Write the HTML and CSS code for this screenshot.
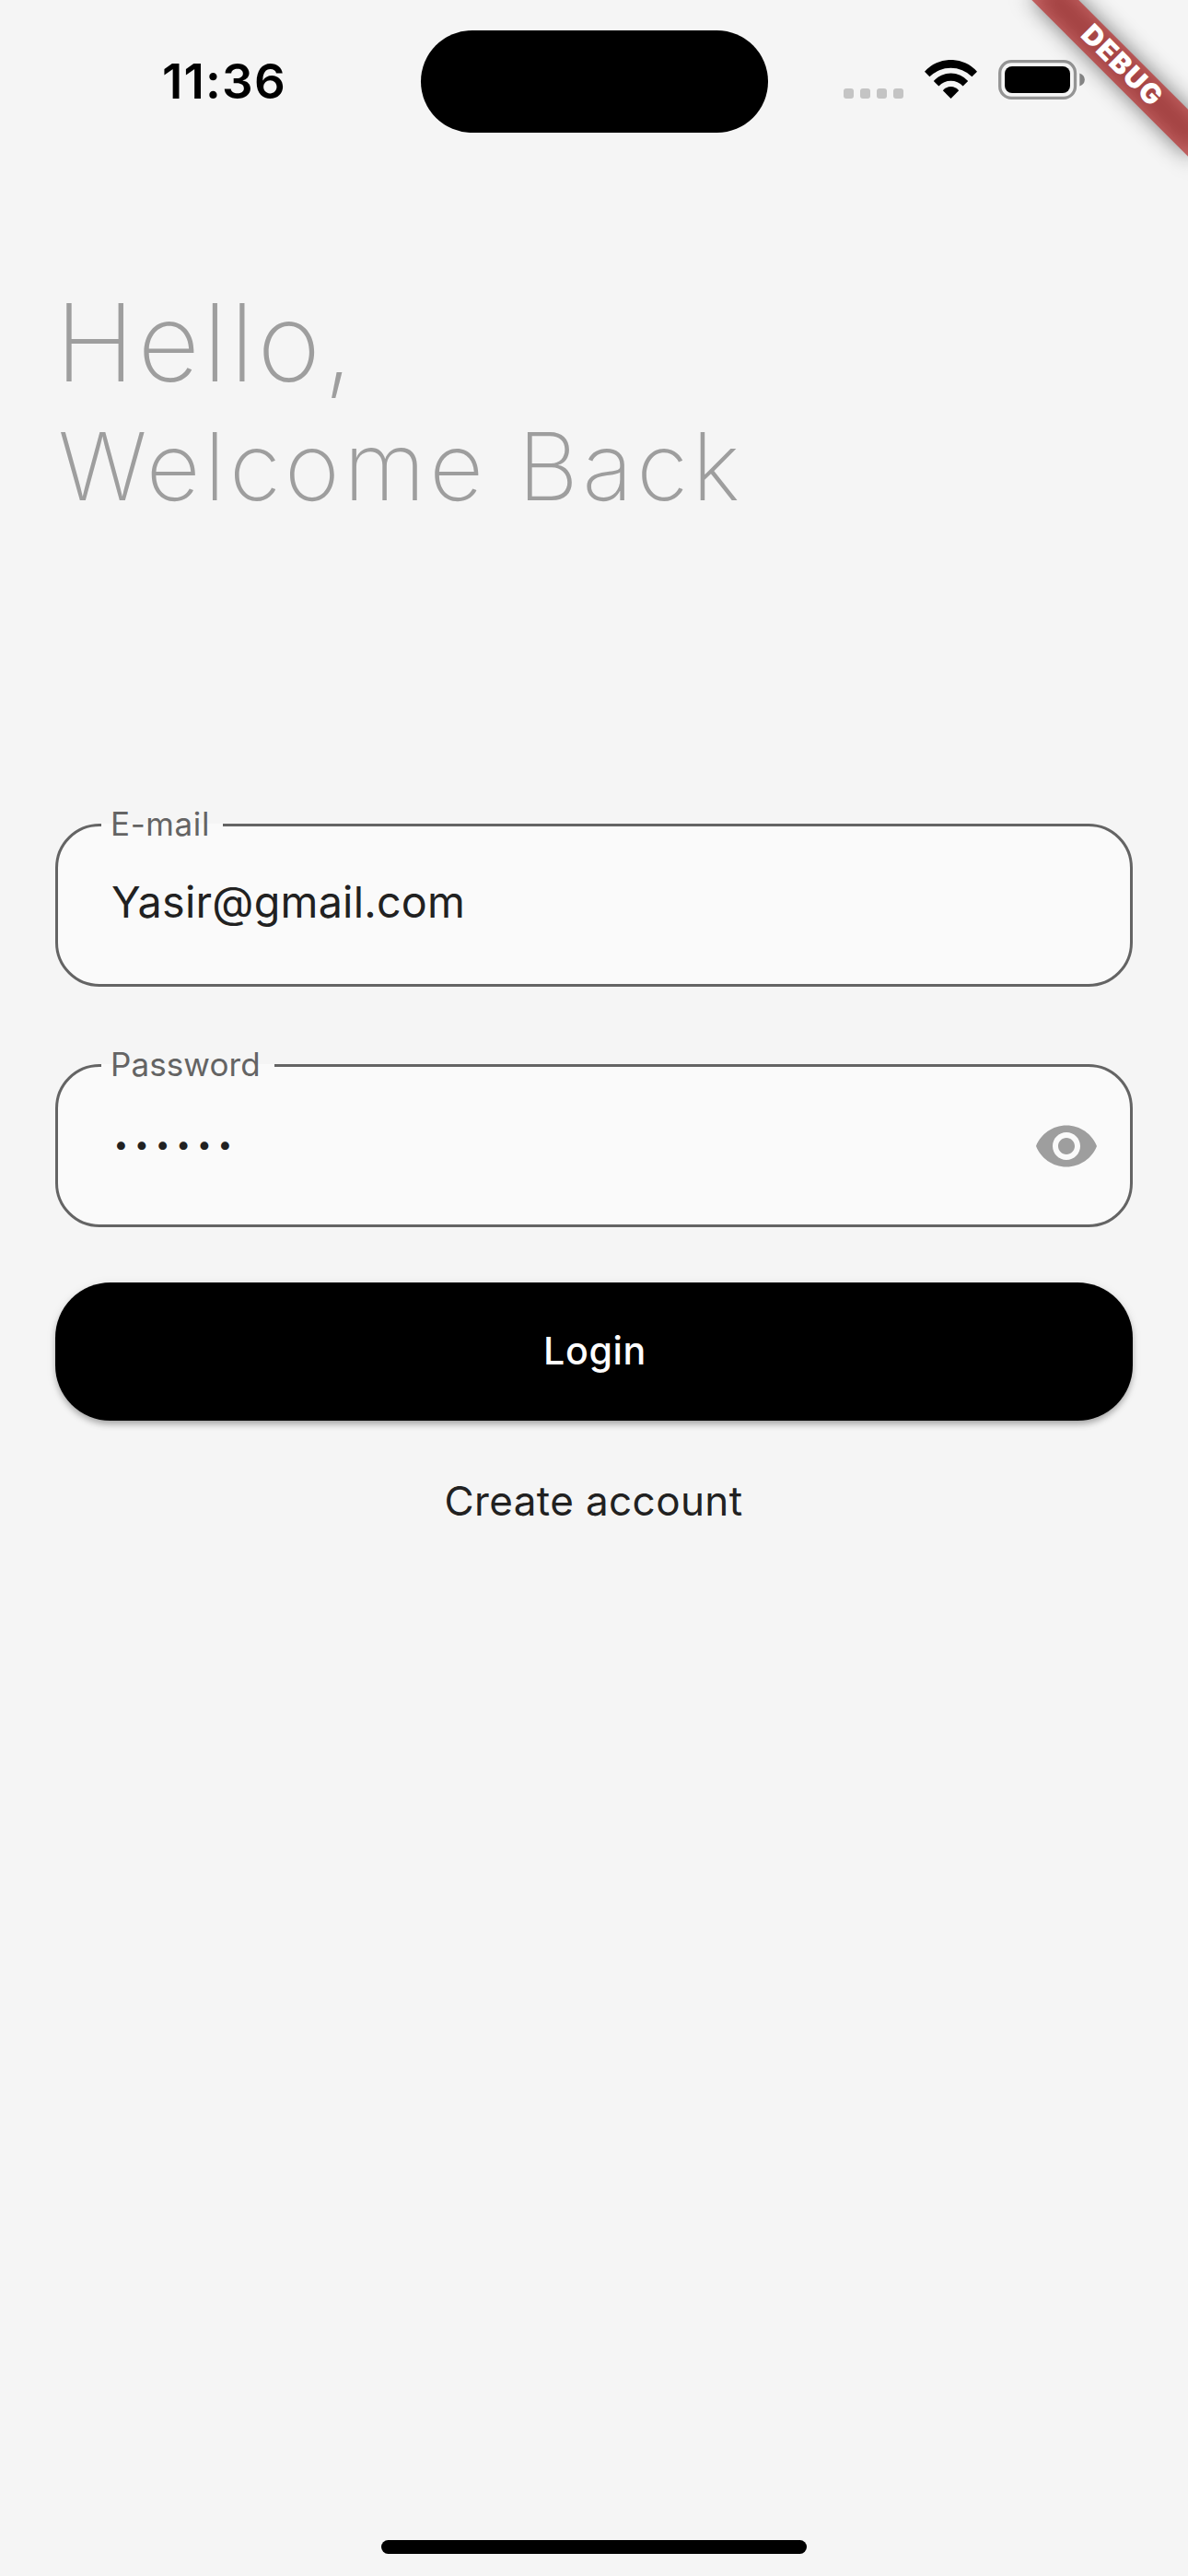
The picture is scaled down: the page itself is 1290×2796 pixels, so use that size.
FILE: index.html
```
<!DOCTYPE html>
<html lang="en">
<head>
<meta charset="utf-8">
<title>Login</title>
<link rel="stylesheet" href="styles.css">
</head>
<body>
<div class="screen">
  <header class="status-bar">
    <span class="time">11:36</span>
    <span class="island"></span>
    <svg class="status-icons" width="262" height="43" viewBox="0 0 262 43">
      <g fill="#c4c4c4">
        <rect x="0" y="31" width="11" height="11" rx="3"/>
        <rect x="18" y="31" width="11" height="11" rx="3"/>
        <rect x="36" y="31" width="11" height="11" rx="3"/>
        <rect x="54" y="31" width="11" height="11" rx="3"/>
      </g>
      <path d="M88 12.8A38 38 0 0 1 145 12.8L139.4 18.2A33 33 0 0 0 93.4 18.2Z"/>
      <path d="M97.8 23A25 25 0 0 1 135.2 23L129.6 28.5A18 18 0 0 0 103.4 28.5Z"/>
      <path d="M107.8 33.3A11 11 0 0 1 125.2 33.3L116.5 42Z"/>
      <rect x="169.7" y="1.7" width="81.8" height="39.6" rx="12.5" fill="none" stroke="#949494" stroke-width="3.3"/>
      <rect x="175" y="7" width="71" height="29" rx="8"/>
      <path d="M256.3 14.5Q261.8 16.5 261.8 21.5T256.3 28.5Z" fill="#858585"/>
    </svg>
  </header>

  <main class="content">
    <h1 class="hello">Hello,</h1>
    <h2 class="welcome">Welcome Back</h2>

    <fieldset class="field">
      <legend class="label label-email">E-mail</legend>
      <div class="field-row email-row"><span class="value">Yasir@gmail.com</span></div>
    </fieldset>

    <fieldset class="field">
      <legend class="label label-password">Password</legend>
      <div class="field-row password-row">
        <span class="bullets">••••••</span>
        <svg class="eye" width="72" height="72" viewBox="0 0 24 24">
          <path fill="#9e9e9e" d="M12 4.5C7 4.5 2.73 7.61 1 12c1.73 4.39 6 7.5 11 7.5s9.27-3.11 11-7.5c-1.73-4.39-6-7.5-11-7.5zM12 17c-2.76 0-5-2.24-5-5s2.24-5 5-5 5 2.24 5 5-2.24 5-5 5zm0-8c-1.66 0-3 1.34-3 3s1.34 3 3 3 3-1.34 3-3-1.34-3-3-3z"/>
        </svg>
      </div>
    </fieldset>

    <button class="login" type="button">Login</button>
    <a class="create">Create account</a>
  </main>

  <div class="home-indicator"></div>

  <div class="banner-corner">
    <div class="banner-shadow"></div>
    <div class="banner">DEBUG</div>
  </div>
</div>
</body>
</html>
```

FILE: styles.css
```
* {
  box-sizing: border-box;
}

body {
  margin: 0;
  background: #f5f5f5;
  font-family: Inter, "Liberation Sans", sans-serif;
  color: #212121;
}

.screen {
  position: relative;
  display: flex;
  flex-direction: column;
  width: 1290px;
  height: 2796px;
  overflow: hidden;
}

.status-bar {
  display: flex;
  align-items: center;
  height: 177px;
  padding-left: 176px;
}

.time {
  width: 280.5px;
  padding-bottom: 2px;
  font-size: 52.8px;
  font-weight: 600;
  line-height: 64px;
  letter-spacing: 1.2px;
  color: #000;
}

.island {
  width: 377px;
  height: 111px;
  border-radius: 55.5px;
  background: #000;
}

.status-icons {
  margin: 0 0 4px 82.5px;
}

.content {
  display: flex;
  flex-direction: column;
  flex: 1;
  padding: 125px 60px 0;
}

.hello,
.welcome {
  margin: 0;
  font-weight: 200;
  color: #9e9e9e;
}

.hello {
  font-size: 117px;
  line-height: 140px;
  letter-spacing: 3.3px;
}

.welcome {
  margin: 3px 0 307px;
  padding-left: 3px;
  font-size: 102px;
  line-height: 122px;
  letter-spacing: 4.3px;
}

.field {
  height: 197px;
  margin: 0 0 64px;
  padding: 0;
  border: 3px solid #646464;
  border-radius: 48px;
  background: #fafafa;
}

.label {
  margin-left: 47px;
  padding: 0 0 3px 10px;
  font-size: 35px;
  line-height: 40px;
  font-weight: 400;
  color: #646464;
}

.label-email {
  width: 132px;
  letter-spacing: 0.6px;
}

.label-password {
  width: 188px;
  letter-spacing: 0.1px;
}

.field-row {
  display: flex;
  align-items: center;
  justify-content: space-between;
  padding-left: 58px;
}

.email-row {
  padding-top: 34px;
}

.value {
  font-size: 46.7px;
  line-height: 56px;
  letter-spacing: 0.24px;
}

.password-row {
  padding: 29.5px 33px 0 60.5px;
}

.bullets {
  padding-bottom: 4px;
  font-size: 28px;
  line-height: 34px;
  letter-spacing: 6.85px;
}

.eye {
  display: block;
}

.login {
  height: 150px;
  margin: -4px 0 61px;
  padding: 0 0 2px 2px;
  border: 0;
  border-radius: 60px;
  background: #000;
  box-shadow: 0 6px 9px -3px rgba(0, 0, 0, 0.2), 0 3px 6px rgba(0, 0, 0, 0.14), 0 2px 12px rgba(0, 0, 0, 0.08);
  font: 500 41.2px/50px Inter, "Liberation Sans", sans-serif;
  letter-spacing: 0.6px;
  color: #fff;
}

.create {
  padding-right: 1px;
  font-size: 44px;
  line-height: 52px;
  letter-spacing: 0.4px;
  text-align: center;
}

.home-indicator {
  align-self: center;
  width: 462px;
  height: 15px;
  margin-bottom: 24px;
  border-radius: 7.5px;
  background: #000;
}

/* Corner ribbon laid over the status bar */
.banner-corner {
  position: absolute;
  top: 0;
  right: 0;
  width: 300px;
  height: 300px;
  overflow: hidden;
}

.banner,
.banner-shadow {
  position: absolute;
  top: 84px;
  left: 180px;
  width: 240px;
  height: 36px;
  transform: rotate(45deg);
  transform-origin: 120px -84px;
}

.banner-shadow {
  background: rgba(0, 0, 0, 0.5);
  filter: blur(12px);
}

.banner {
  background: rgba(183, 28, 28, 0.627);
  font-size: 30px;
  font-weight: 900;
  line-height: 33px;
  letter-spacing: 1.3px;
  text-align: center;
  color: #fff;
}
```
